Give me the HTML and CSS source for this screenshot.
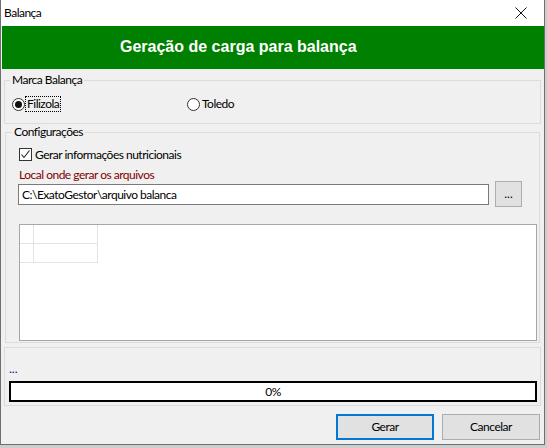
FILE: index.html
```html
<!DOCTYPE html>
<html lang="pt-BR">
<head>
<meta charset="utf-8">
<title>Balança</title>
<link rel="stylesheet" href="styles.css">
</head>
<body>
<div class="window">
  <div class="titlebar">
    <span class="title">Balança</span>
    <svg class="close" width="12" height="12" viewBox="0 0 12 12"><path d="M0.5 0.5 L11.5 11.5 M11.5 0.5 L0.5 11.5" stroke="#111" stroke-width="1" fill="none"/></svg>
  </div>
  <div class="banner">Geração de carga para balança</div>
  <div class="client">
    <fieldset class="group group-marca">
      <legend>Marca Balança</legend>
      <div class="radio-row">
        <label class="radio radio-first"><span class="radio-circle checked"></span><span class="radio-text focus">Filizola</span></label>
        <label class="radio"><span class="radio-circle"></span><span class="radio-text">Toledo</span></label>
      </div>
    </fieldset>
    <fieldset class="group group-config">
      <legend>Configurações</legend>
      <label class="check-row">
        <span class="checkbox"><svg width="11" height="11" viewBox="0 0 11 11"><path d="M1.5 5.5 L4 8.5 L9.5 1.5" stroke="#222" stroke-width="1.1" fill="none"/></svg></span>
        <span>Gerar informações nutricionais</span>
      </label>
      <div class="path-label">Local onde gerar os arquivos</div>
      <div class="path-row">
        <div class="edit">C:\ExatoGestor\arquivo balanca</div>
        <div class="browse">...</div>
      </div>
      <div class="memo">
        <div class="grid">
          <div class="cell"></div><div class="cell"></div>
          <div class="cell"></div><div class="cell"></div>
        </div>
      </div>
    </fieldset>
    <div class="panel">
      <div class="status">...</div>
      <div class="progress">0%</div>
    </div>
    <div class="buttons">
      <div class="btn btn-default">Gerar</div>
      <div class="btn">Cancelar</div>
    </div>
  </div>
</div>
</body>
</html>
```
FILE: styles.css
```css
* { box-sizing: border-box; }
html, body { margin: 0; padding: 0; }
body {
  background: #cdcdcd;
  width: 547px;
  height: 448px;
  overflow: hidden;
  font-family: Lato, "Liberation Sans", sans-serif;
  font-size: 12px;
  letter-spacing: -0.5px;
  color: #000;
}
.window {
  width: 545px;
  height: 445px;
  background: #f0f0f0;
  border-left: 1px solid #6f6f6f;
  border-right: 1px solid #6f6f6f;
  border-bottom: 1px solid #6f6f6f;
}
.titlebar {
  height: 26px;
  background: #fff;
  display: flex;
  align-items: center;
  justify-content: space-between;
  padding: 0 17px 0 3px;
}
.title { line-height: 14px; }
.close { display: block; }
.banner {
  margin-left: 1px;
  height: 43px;
  background: #008000;
  color: #fff;
  font-family: "Liberation Sans", Arial, sans-serif;
  font-weight: bold;
  font-size: 16px;
  letter-spacing: 0;
  line-height: 41px;
  padding-left: 118px;
  white-space: nowrap;
}
.client { display: flex; flex-direction: column; }
.group {
  border: 1px solid #dcdcdc;
  margin: 0;
  min-width: 0;
}
.group legend {
  line-height: 14px;
  padding: 0 2px;
}
.group-marca {
  margin: 4px 3px 0 3px;
  padding: 9px 3px 11px 7px;
}
.group-marca legend { margin-left: -2px; }
.radio-row { display: flex; height: 16px; align-items: center; }
.radio { display: flex; align-items: center; }
.radio-first { width: 175px; }
.radio-circle {
  width: 13px;
  height: 13px;
  border: 1px solid #333;
  border-radius: 50%;
  background: #fff;
  display: flex;
  align-items: center;
  justify-content: center;
}
.radio-circle.checked::after {
  content: "";
  width: 7px;
  height: 7px;
  border-radius: 50%;
  background: #111;
}
.radio-text { margin-left: 2px; line-height: 14px; }
.radio-text.focus { outline: 1px dotted #000; outline-offset: 0; padding: 0 1px; margin-left: 1px; }
.group-config {
  margin: 1px 4px 0 4px;
  padding: 8px 2px 1px 13px;
}
.group-config legend { margin-left: -7px; }
.check-row { display: flex; align-items: center; height: 14px; }
.checkbox {
  width: 13px;
  height: 13px;
  border: 1px solid #333;
  background: #fff;
  margin-right: 3px;
  display: flex;
  align-items: center;
  justify-content: center;
}
.checkbox svg { display: block; }
.path-label {
  margin-top: 7px;
  line-height: 13px;
  color: #800000;
}
.path-row { display: flex; align-items: flex-start; height: 26px; }
.edit {
  margin-top: 3px;
  margin-left: -1px;
  width: 471px;
  height: 21px;
  border: 1px solid #7a7a7a;
  background: #fff;
  padding-left: 3px;
  line-height: 19px;
  white-space: nowrap;
}
.browse {
  margin-left: 6px;
  width: 27px;
  height: 26px;
  background: #e1e1e1;
  border: 1px solid #adadad;
  text-align: center;
  line-height: 24px;
  letter-spacing: 0;
}
.memo {
  margin-top: 17px;
  width: 518px;
  height: 117px;
  border: 1px solid #a7a7a7;
  background: #fff;
}
.grid {
  display: grid;
  grid-template-columns: 14px 64px;
  grid-auto-rows: 19px;
}
.cell {
  border-right: 1px solid #e3e3e3;
  border-bottom: 1px solid #e3e3e3;
}
.panel {
  margin: 4px 3px 0 3px;
  height: 59px;
  border: 1px solid #dcdcdc;
  padding: 14px 3px 0 4px;
}
.status { line-height: 13px; color: #000080; letter-spacing: 0; }
.progress {
  margin-top: 6px;
  height: 21px;
  border: 2px solid #000;
  background: #fff;
  text-align: center;
  line-height: 17px;
}
.buttons {
  display: flex;
  justify-content: flex-end;
  gap: 8px;
  margin-top: 8px;
  padding-right: 4px;
}
.btn {
  width: 98px;
  height: 26px;
  background: #e1e1e1;
  border: 1px solid #adadad;
  text-align: center;
  line-height: 24px;
}
.btn-default { border: 2px solid #0078d7; line-height: 22px; }
```
